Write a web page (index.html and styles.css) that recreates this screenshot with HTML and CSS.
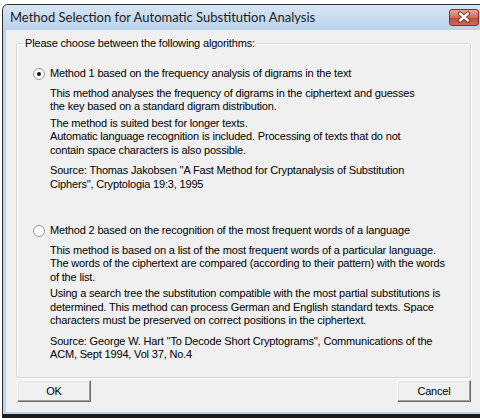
FILE: index.html
```html
<!DOCTYPE html>
<html>
<head>
<meta charset="utf-8">
<link rel="stylesheet" href="styles.css">
</head>
<body>
<div class="screen">
  <div class="window">
    <div class="titlebar">
      <span class="title">Method Selection for Automatic Substitution Analysis</span>
      <span class="close">
        <svg width="30" height="17" viewBox="0 0 30 17">
          <path d="M11 4.5 L19 11.5 M19 4.5 L11 11.5" stroke="#5b2a24" stroke-width="4.2" stroke-linecap="round" fill="none"/>
          <path d="M11 4.5 L19 11.5 M19 4.5 L11 11.5" stroke="#ffffff" stroke-width="2.4" stroke-linecap="round" fill="none"/>
        </svg>
      </span>
    </div>
    <div class="client">
      <fieldset class="group">
        <legend class="legend">Please choose between the following algorithms:</legend>
        <div class="option first">
          <div class="opt-head"><span class="radio checked"></span><span>Method 1 based on the frequency analysis of digrams in the text</span></div>
          <div class="desc">
            <p>This method analyses the frequency of digrams in the ciphertext and guesses<br>the key based on a standard digram distribution.</p>
            <p>The method is suited best for longer texts.<br>Automatic language recognition is included. Processing of texts that do not<br>contain space characters is also possible.</p>
            <p class="src">Source: Thomas Jakobsen ''A Fast Method for Cryptanalysis of Substitution<br>Ciphers'', Cryptologia 19:3, 1995</p>
          </div>
        </div>
        <div class="option second">
          <div class="opt-head"><span class="radio"></span><span>Method 2 based on the recognition of the most frequent words of a language</span></div>
          <div class="desc">
            <p>This method is based on a list of the most frequent words of a particular language.<br>The words of the ciphertext are compared (according to their pattern) with the words<br>of the list.</p>
            <p>Using a search tree the substitution compatible with the most partial substitutions is<br>determined. This method can process German and English standard texts. Space<br>characters must be preserved on correct positions in the ciphertext.</p>
            <p class="src">Source: George W. Hart ''To Decode Short Cryptograms'', Communications of the<br>ACM, Sept 1994, Vol 37, No.4</p>
          </div>
        </div>
      </fieldset>
      <div class="buttons">
        <span class="btn">OK</span>
        <span class="btn">Cancel</span>
      </div>
    </div>
  </div>
</div>
</body>
</html>
```
FILE: styles.css
```css
html, body {
  margin: 0;
  padding: 0;
}
.screen {
  width: 480px;
  height: 418px;
  overflow: hidden;
  background: #ffffff;
  font-family: "Liberation Sans", Arial, sans-serif;
  font-size: 11px;
  letter-spacing: -0.17px;
  color: #000;
}
.window {
  margin: 4px 0 0 2px;
  width: 490px;
  border: 1px solid #2c2c2c;
  border-bottom: 4px solid #1c1c1c;
  border-radius: 6px 6px 0 0;
  background: #bcd3eb;
  padding-bottom: 2px;
}
.titlebar {
  height: 25px;
  display: flex;
  align-items: flex-start;
  padding: 0 14px 0 7px;
  background: linear-gradient(#d8e6f5, #bad2ea);
  border-radius: 5px 5px 0 0;
}
.title {
  font-family: Lato, "Noto Sans", sans-serif;
  font-size: 13px;
  letter-spacing: 0;
  line-height: 25px;
  color: #1b1b1b;
}
.close {
  margin-left: auto;
  margin-top: 4px;
  width: 28px;
  height: 15px;
  border: 1px solid #7a3127;
  border-radius: 3px;
  background: linear-gradient(#e8a89c, #d46a5c 50%, #c2463a 51%, #cf6a58);
  display: flex;
  align-items: center;
  justify-content: center;
  overflow: hidden;
}
.close svg {
  display: block;
  flex: none;
}
.client {
  margin-left: 3px;
  height: 382px;
  background: #f0f0f0;
  padding-top: 7px;
  box-sizing: border-box;
}
.group {
  margin: 0 0 0 10px;
  width: 453px;
  padding: 0 0 15px 0;
  border: 1px solid #d5d5d5;
  border-radius: 3px;
  box-shadow: inset 1px 1px 0 #ffffff, 1px 1px 0 #ffffff;
  min-width: 0;
}
.legend {
  margin-left: 7px;
  padding: 0 1px;
  line-height: 13px;
}
.option {
  padding-left: 16px;
  line-height: 13.5px;
}
.option.first {
  padding-top: 17px;
}
.option.second {
  margin-top: 33px;
}
.opt-head {
  display: flex;
  align-items: center;
  height: 13.5px;
}
.radio {
  width: 12px;
  height: 12px;
  box-sizing: border-box;
  border-radius: 50%;
  border: 1px solid #9b9b9b;
  background: radial-gradient(circle, #ffffff 0, #ffffff 55%, #e4e4e4 100%);
  margin-right: 5px;
  display: flex;
  align-items: center;
  justify-content: center;
  flex: none;
}
.radio.checked::after {
  content: "";
  width: 4px;
  height: 4px;
  border-radius: 50%;
  background: #111;
}
.desc {
  padding-left: 17px;
}
.desc p {
  margin: 3px 0 0 0;
}
.desc p:first-child {
  margin-top: 6px;
}
.desc p.src {
  margin-top: 7px;
}
.buttons {
  margin: 2px 0 0 11px;
  width: 454px;
  display: flex;
  justify-content: space-between;
}
.btn {
  width: 74px;
  height: 22px;
  box-sizing: border-box;
  display: flex;
  align-items: center;
  justify-content: center;
  background: #f0f0f0;
  border: 1px solid;
  border-color: #ffffff #696969 #696969 #ffffff;
  box-shadow: inset -1px -1px 0 #a0a0a0, inset 1px 1px 0 #e3e3e3;
}
```
